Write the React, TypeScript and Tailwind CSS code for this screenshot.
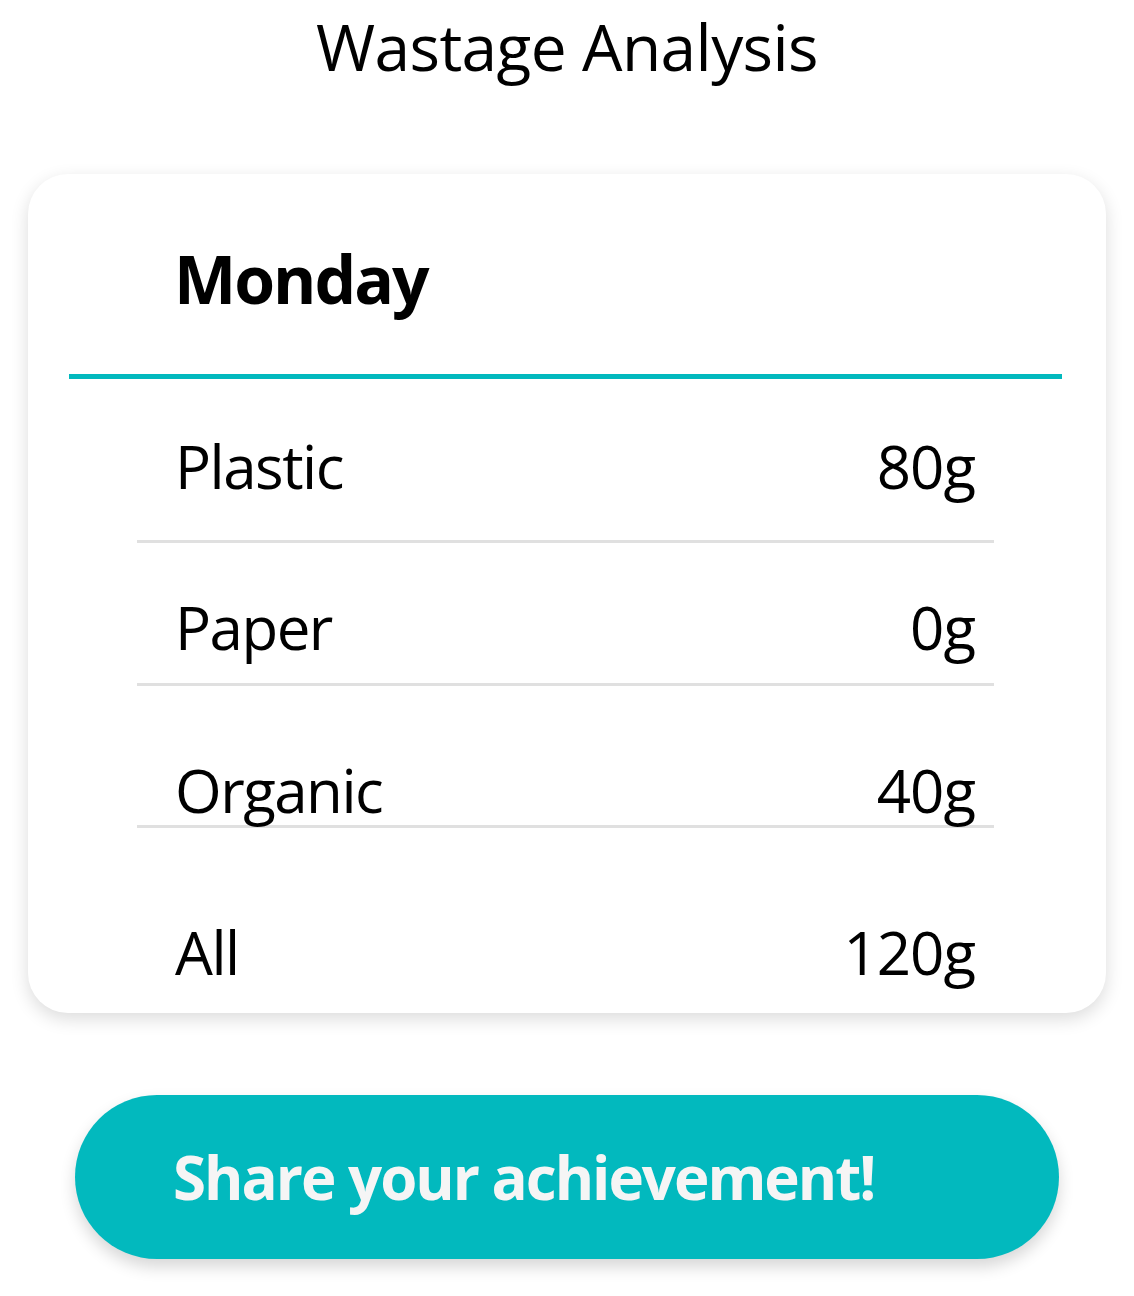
export default function App() {
  const font = { fontFamily: '"Open Sans", "Noto Sans", sans-serif' };
  return (
    <div className="w-[1134px] min-h-[1296px] bg-white flex flex-col items-center" style={font}>
      <h1 className="text-[64px] leading-[94px] font-normal text-black tracking-[-0.6px]">Wastage Analysis</h1>
      <div className="mt-[80px] w-[1078px] rounded-[40px] bg-white shadow-[0_6px_18px_rgba(0,0,0,0.14)] pb-[21px]">
        <div className="pt-[59px] pl-[146px] text-[66px] leading-[90px] font-bold text-black tracking-[-2px]">Monday</div>
        <div className="mt-[51px] ml-[41px] mr-[44px] h-[5px] bg-[#02b9be]" />
        <div className="ml-[109px] mr-[112px]">
          <Row label="Plastic" value="80g" mt="mt-[47px]" />
          <div className="mt-[34px] h-[3px] bg-[#e0e0e0]" />
          <Row label="Paper" value="0g" mt="mt-[44px]" />
          <div className="mt-[16px] h-[3px] bg-[#e0e0e0]" />
          <Row label="Organic" value="40g" mt="mt-[64px]" />
          <div className="-mt-[5px] h-[3px] bg-[#e0e0e0]" />
          <Row label="All" value="120g" mt="mt-[84px]" />
        </div>
      </div>
      <button className="mt-[82px] w-[984px] h-[164px] rounded-full bg-[#02b9be] shadow-[0_8px_16px_rgba(0,0,0,0.16)] flex items-center pl-[98px]">
        <span className="text-[60px] font-bold text-[#f5f5f5] tracking-[-2px]">Share your achievement!</span>
      </button>
    </div>
  );
}

function Row({ label, value, mt }: { label: string; value: string; mt: string }) {
  return (
    <div className={`${mt} flex justify-between pl-[38px] pr-[19px] text-[60px] leading-[80px] text-black`}>
      <span className="tracking-[-1.5px]">{label}</span>
      <span className="tracking-[-1px]">{value}</span>
    </div>
  );
}
